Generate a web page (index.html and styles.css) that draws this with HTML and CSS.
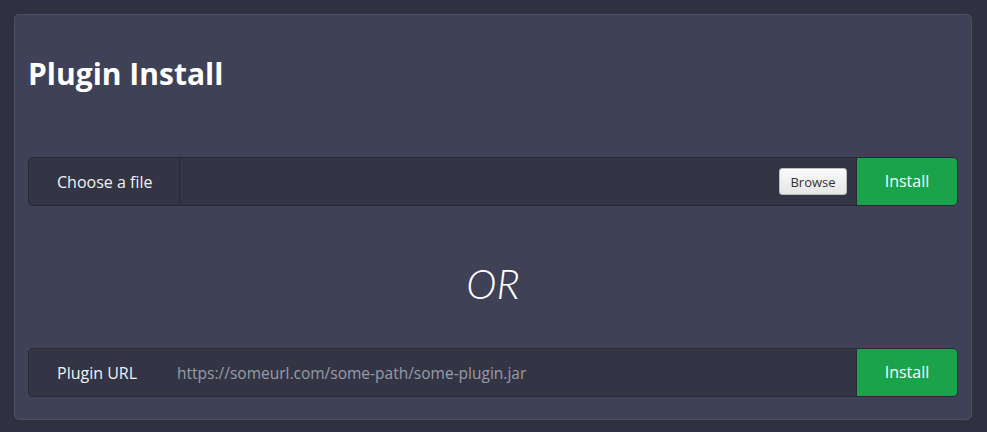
FILE: index.html
```html
<!DOCTYPE html>
<html>
<head>
<meta charset="utf-8">
<link rel="stylesheet" href="styles.css">
</head>
<body>
<div class="card">
  <h1 class="title">Plugin Install</h1>
  <div class="group">
    <div class="prefix prefix-file">Choose a file</div>
    <div class="field file-field">
      <button class="browse">Browse</button>
    </div>
    <button class="install">Install</button>
  </div>
  <div class="or">OR</div>
  <div class="group">
    <div class="prefix">Plugin URL</div>
    <div class="field url-field">https://someurl.com/some-path/some-plugin.jar</div>
    <button class="install">Install</button>
  </div>
</div>
</body>
</html>
```
FILE: styles.css
```css
html, body { margin: 0; padding: 0; }
body {
  background: #2f3140;
  width: 987px;
  height: 432px;
  padding: 14px;
  box-sizing: border-box;
  font-family: "Open Sans", "Noto Sans", sans-serif;
  color: #fff;
}
.card {
  background: #3f4156;
  border: 1px solid #4c4e63;
  border-radius: 5px;
  width: 958px;
  height: 406px;
  box-sizing: border-box;
  padding: 0 13px;
}
.title {
  margin: 0;
  padding-top: 37px;
  height: 142px;
  box-sizing: border-box;
  font-size: 30px;
  font-weight: 700;
  line-height: 44px;
}
.group {
  display: flex;
  height: 49px;
  background: #333545;
  border: 1px solid #272937;
  border-radius: 5px;
  box-sizing: border-box;
  overflow: hidden;
}
.prefix {
  display: flex;
  align-items: center;
  padding: 0 28px;
  font-size: 16px;
  color: #f2f2f4;
  white-space: nowrap;
  flex-shrink: 0;
}
.prefix-file {
  width: 151px;
  padding-right: 0;
  box-sizing: border-box;
  border-right: 1px solid #272937;
}
.field {
  flex: 1;
  display: flex;
  align-items: center;
  white-space: nowrap;
}
.file-field { justify-content: flex-end; padding-right: 9px; }
.url-field {
  padding-left: 12px;
  font-size: 15.5px;
  color: #9a9ba6;
}
.browse {
  font-family: "Open Sans", "Noto Sans", sans-serif;
  font-size: 13px;
  color: #333;
  background: linear-gradient(#fafafa, #e6e6e6);
  border: 1px solid #bbb;
  border-radius: 3px;
  height: 27px;
  width: 68px;
  padding: 0;
}
.install {
  width: 101px;
  box-sizing: border-box;
  flex-shrink: 0;
  background: #1aa34a;
  border: none;
  border-left: 1px solid #272937;
  color: #fff;
  font-family: "Open Sans", "Noto Sans", sans-serif;
  font-size: 16px;
  padding: 0 0 1px;
}
.or {
  text-align: center;
  font-family: Lato, sans-serif;
  font-size: 41px;
  font-weight: 300;
  font-style: italic;
  height: 142px;
  box-sizing: border-box;
  padding-top: 55px;
  line-height: 46px;
}
```
